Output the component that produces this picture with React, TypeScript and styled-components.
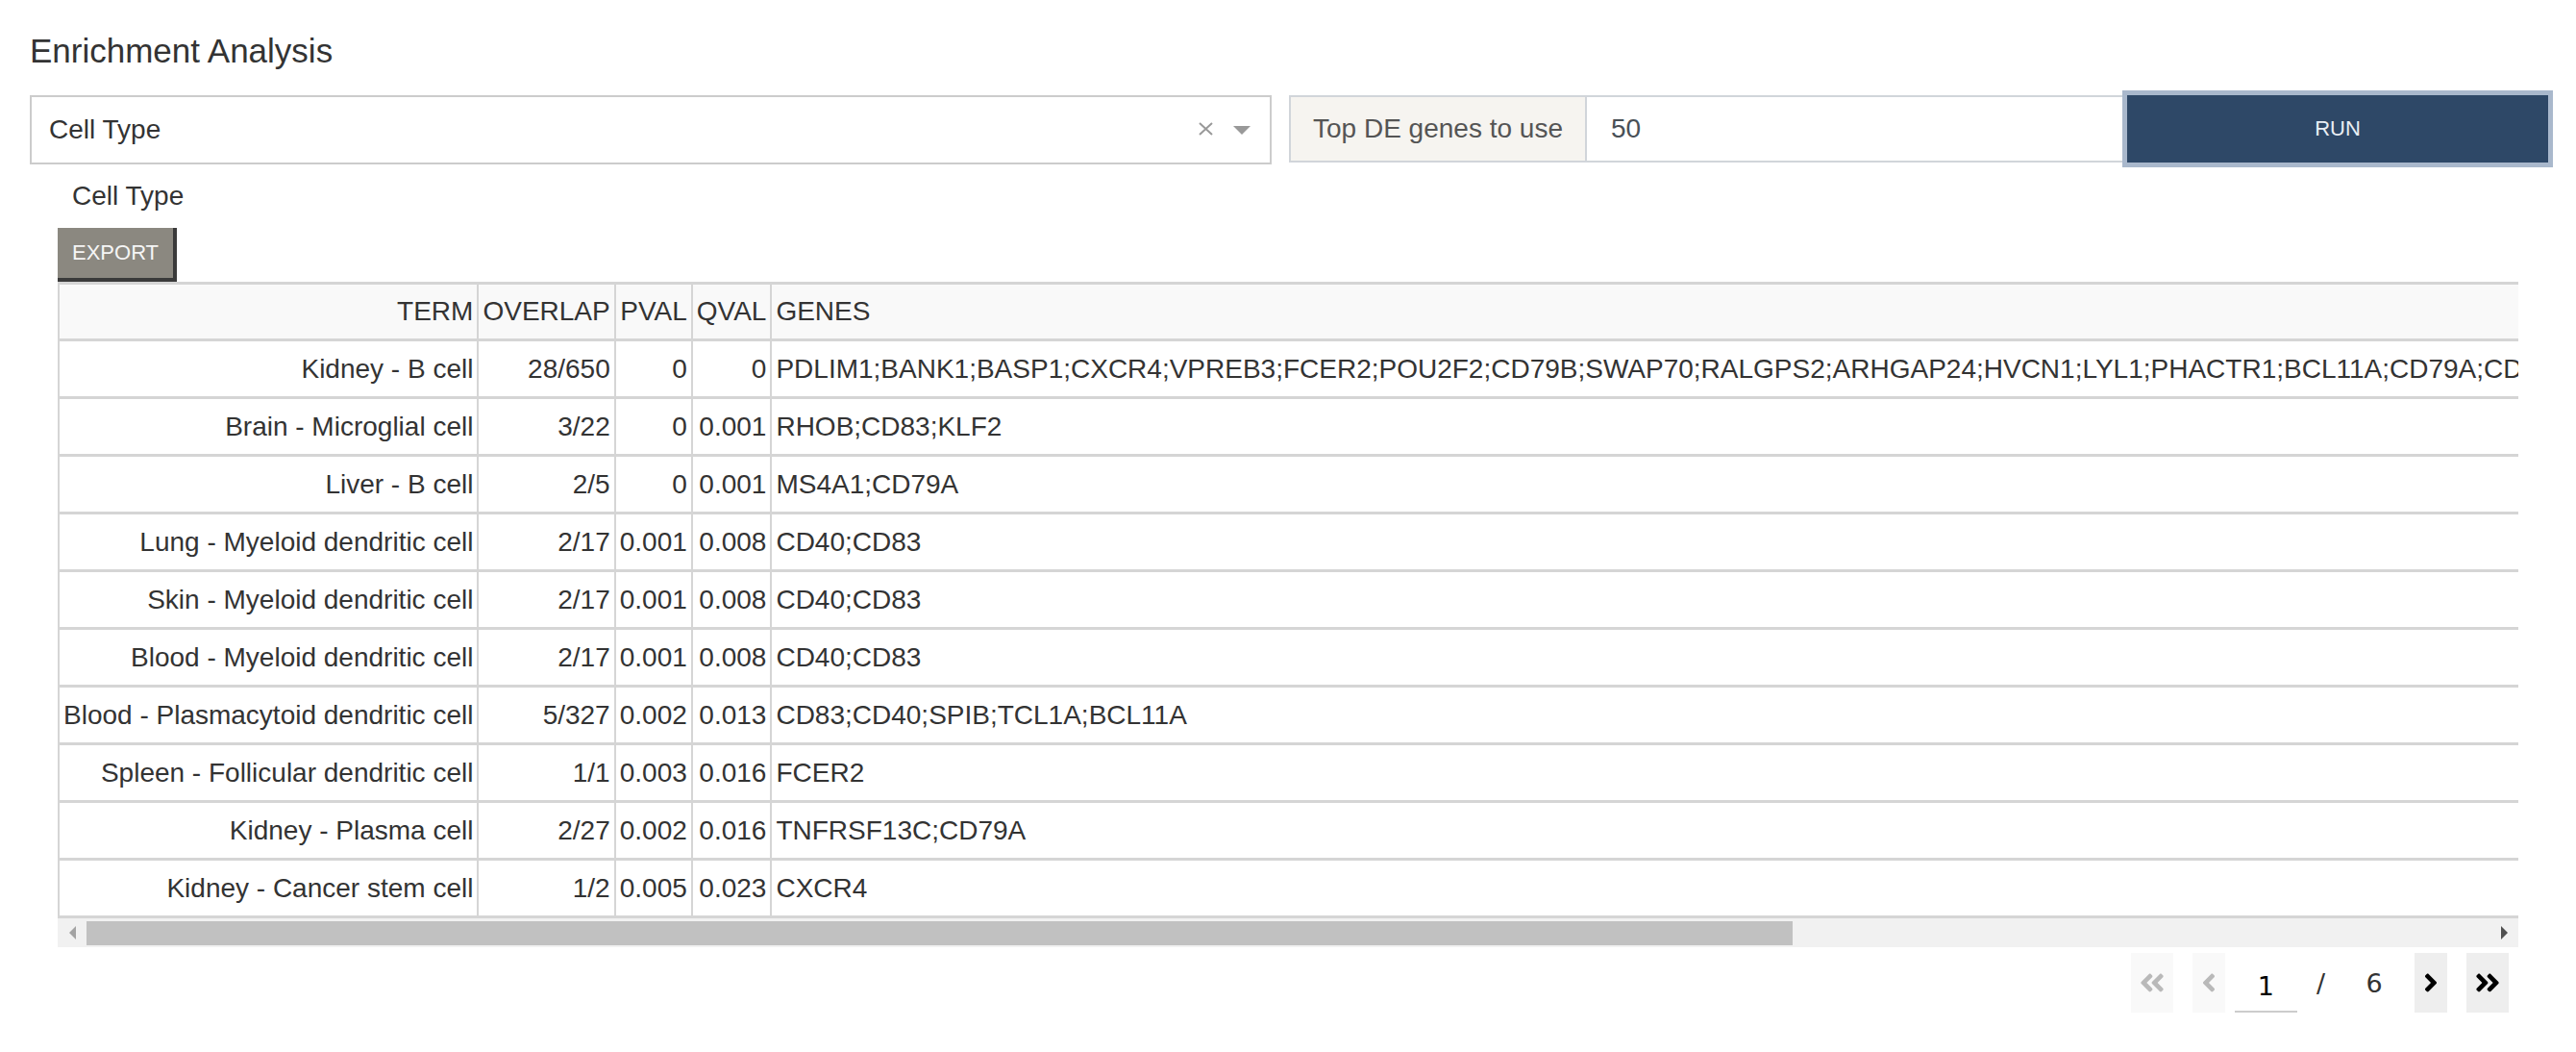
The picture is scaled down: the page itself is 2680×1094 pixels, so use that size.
import React from 'react';
import styled, { createGlobalStyle } from 'styled-components';
import { FaAngleDoubleLeft, FaAngleLeft, FaAngleRight, FaAngleDoubleRight } from 'react-icons/fa';

const GlobalStyle = createGlobalStyle`
  html, body { margin: 0; padding: 0; background: #fff; }
  body { font-family: "Liberation Sans", Arial, sans-serif; color: #333; }
  * { box-sizing: border-box; }
`;

const Page = styled.div`
  padding: 33px 29px 30px 31px;
`;

const Title = styled.h3`
  margin: 0;
  font-size: 35px;
  line-height: 40px;
  font-weight: 400;
  color: #333;
`;

const Controls = styled.div`
  display: grid;
  grid-template-columns: 1292fr 1310fr;
  column-gap: 18px;
  align-items: start;
  margin-top: 26px;
`;

const SelectBox = styled.div`
  display: flex;
  align-items: center;
  height: 72px;
  border: 2px solid #ccc;
  padding: 0 20px 0 18px;
  font-size: 28px;
  color: #333;
`;

const SelectValue = styled.span`
  flex: 1;
`;

const ClearIcon = styled.svg`
  width: 15px;
  height: 14px;
  margin-right: 21px;
  margin-top: -3px;
`;

const Caret = styled.span`
  width: 0;
  height: 0;
  border-style: solid;
  border-width: 9px 9px 0 9px;
  border-color: #999 transparent transparent transparent;
`;

const InputGroup = styled.div`
  display: flex;
  height: 70px;
`;

const Addon = styled.div`
  width: 310px;
  flex: none;
  display: flex;
  align-items: center;
  justify-content: center;
  background: #f6f4f0;
  border: 2px solid #d1d5da;
  font-size: 28px;
  color: #555;
  white-space: nowrap;
`;

const NumberInput = styled.input`
  width: 559px;
  flex: none;
  border: 2px solid #d1d5da;
  border-left: 0;
  padding: 0 0 0 25px;
  font-family: "Liberation Sans", Arial, sans-serif;
  font-size: 28px;
  color: #495057;
  outline: none;
  background: #fff;
`;

const RunButton = styled.button`
  flex: 1;
  margin-left: 3px;
  background: #2e4867;
  color: #e9eef4;
  border: 0;
  box-shadow: 0 0 0 5px #a9b8cc;
  font-family: "Liberation Sans", Arial, sans-serif;
  font-size: 22px;
  position: relative;
`;

const Results = styled.div`
  padding: 0 31px 0 29px;
  margin-top: 17px;
`;

const SectionLabel = styled.div`
  padding-left: 15px;
  font-size: 28px;
  line-height: 32px;
  color: #333;
`;

const ExportButton = styled.button`
  display: block;
  margin-top: 17px;
  height: 56px;
  padding: 0 15px;
  background: #8b8880;
  color: #f5f5f5;
  border: 0;
  border-right: 4px solid #3a3a3a;
  border-bottom: 4px solid #3a3a3a;
  font-family: "Liberation Sans", Arial, sans-serif;
  font-size: 22px;
`;

const TableScroll = styled.div`
  overflow: hidden;
`;

const Table = styled.table`
  border-collapse: separate;
  border-spacing: 0;
  border-top: 3px solid #d5d5d5;
  border-left: 2px solid #d5d5d5;
  font-size: 28px;
  white-space: nowrap;
  color: #333;
`;

const HeadCell = styled.th<{ $align?: string }>`
  box-sizing: border-box;
  height: 59px;
  padding: 0 4px;
  background: #f9f9f9;
  font-weight: 400;
  text-align: ${(p) => p.$align || 'right'};
  border-right: 2px solid #d5d5d5;
  border-bottom: 3px solid #d5d5d5;
`;

const Cell = styled.td<{ $align?: string }>`
  box-sizing: border-box;
  height: 60px;
  padding: 0 4px;
  text-align: ${(p) => p.$align || 'right'};
  border-right: 2px solid #d5d5d5;
  border-bottom: 3px solid #d5d5d5;
`;

const ScrollBar = styled.div`
  display: flex;
  height: 30px;
  background: #f1f1f1;
`;

const ScrollArrow = styled.div<{ $dir: 'left' | 'right' }>`
  width: 30px;
  flex: none;
  display: flex;
  align-items: center;
  justify-content: center;

  &::before {
    content: '';
    width: 0;
    height: 0;
    border-style: solid;
    border-width: ${(p) => (p.$dir === 'left' ? '7px 7px 7px 0' : '7px 0 7px 7px')};
    border-color: ${(p) =>
      p.$dir === 'left'
        ? 'transparent #a3a3a3 transparent transparent'
        : 'transparent transparent transparent #505050'};
  }
`;

const ScrollTrack = styled.div`
  flex: 1;
  padding: 3px 0 2px 0;
`;

const ScrollThumb = styled.div`
  height: 100%;
  background: #c1c1c1;
`;

const Pager = styled.div`
  display: flex;
  justify-content: flex-end;
  align-items: center;
  margin-top: 6px;
  padding-right: 10px;
  height: 62px;
  font-family: "DejaVu Sans", sans-serif;
  font-size: 27px;
`;

const PageBtn = styled.button<{ $w: number; $on?: boolean; $ml?: number }>`
  width: ${(p) => p.$w}px;
  height: 62px;
  margin-left: ${(p) => p.$ml || 0}px;
  display: flex;
  align-items: center;
  justify-content: center;
  padding: 0;
  border: 0;
  background: ${(p) => (p.$on ? '#eeeeee' : '#f9f9f9')};
  color: ${(p) => (p.$on ? '#000' : '#b9b9b9')};
`;

const PageInput = styled.input`
  width: 65px;
  height: 62px;
  margin-left: 10px;
  border: 0;
  border-bottom: 2px solid #cccccc;
  padding: 8px 0 0 0;
  text-align: center;
  font-family: "DejaVu Sans", sans-serif;
  font-size: 27px;
  color: #000;
  background: transparent;
  outline: none;
`;

const PagerText = styled.span<{ $w?: number; $ml: number }>`
  margin-left: ${(p) => p.$ml}px;
  width: ${(p) => (p.$w ? `${p.$w}px` : 'auto')};
  text-align: center;
  color: #333;
`;

type Row = [string, string, string, string, string];

const rows: Row[] = [
  [
    'Kidney - B cell',
    '28/650',
    '0',
    '0',
    'PDLIM1;BANK1;BASP1;CXCR4;VPREB3;FCER2;POU2F2;CD79B;SWAP70;RALGPS2;ARHGAP24;HVCN1;LYL1;PHACTR1;BCL11A;CD79A;CD37;CD22;CD40;CD83;SPIB;BLK;TCL1A;MS4A1;KLF2;IRF8;FCRLA;CD74',
  ],
  ['Brain - Microglial cell', '3/22', '0', '0.001', 'RHOB;CD83;KLF2'],
  ['Liver - B cell', '2/5', '0', '0.001', 'MS4A1;CD79A'],
  ['Lung - Myeloid dendritic cell', '2/17', '0.001', '0.008', 'CD40;CD83'],
  ['Skin - Myeloid dendritic cell', '2/17', '0.001', '0.008', 'CD40;CD83'],
  ['Blood - Myeloid dendritic cell', '2/17', '0.001', '0.008', 'CD40;CD83'],
  ['Blood - Plasmacytoid dendritic cell', '5/327', '0.002', '0.013', 'CD83;CD40;SPIB;TCL1A;BCL11A'],
  ['Spleen - Follicular dendritic cell', '1/1', '0.003', '0.016', 'FCER2'],
  ['Kidney - Plasma cell', '2/27', '0.002', '0.016', 'TNFRSF13C;CD79A'],
  ['Kidney - Cancer stem cell', '1/2', '0.005', '0.023', 'CXCR4'],
];

const visibleWidth = 2560;
const contentWidth = 3605;

export default function App() {
  return (
    <>
      <GlobalStyle />
      <Page>
        <Title>Enrichment Analysis</Title>
        <Controls>
          <SelectBox>
            <SelectValue>Cell Type</SelectValue>
            <ClearIcon viewBox="0 0 15 14">
              <path d="M1 1 L14 13 M14 1 L1 13" stroke="#999" strokeWidth="2" fill="none" />
            </ClearIcon>
            <Caret />
          </SelectBox>
          <InputGroup>
            <Addon>Top DE genes to use</Addon>
            <NumberInput type="text" defaultValue="50" />
            <RunButton>RUN</RunButton>
          </InputGroup>
        </Controls>
        <Results>
          <SectionLabel>Cell Type</SectionLabel>
          <ExportButton>EXPORT</ExportButton>
          <TableScroll>
            <Table>
              <thead>
                <tr>
                  <HeadCell>TERM</HeadCell>
                  <HeadCell>OVERLAP</HeadCell>
                  <HeadCell>PVAL</HeadCell>
                  <HeadCell>QVAL</HeadCell>
                  <HeadCell $align="left">GENES</HeadCell>
                </tr>
              </thead>
              <tbody>
                {rows.map((r, i) => (
                  <tr key={i}>
                    <Cell>{r[0]}</Cell>
                    <Cell>{r[1]}</Cell>
                    <Cell>{r[2]}</Cell>
                    <Cell>{r[3]}</Cell>
                    <Cell $align="left">{r[4]}</Cell>
                  </tr>
                ))}
              </tbody>
            </Table>
          </TableScroll>
          <ScrollBar>
            <ScrollArrow $dir="left" />
            <ScrollTrack>
              <ScrollThumb style={{ width: `${(visibleWidth / contentWidth) * 100}%` }} />
            </ScrollTrack>
            <ScrollArrow $dir="right" />
          </ScrollBar>
          <Pager>
            <PageBtn $w={44}>
              <FaAngleDoubleLeft size={30} />
            </PageBtn>
            <PageBtn $w={34} $ml={20}>
              <FaAngleLeft size={30} />
            </PageBtn>
            <PageInput type="text" defaultValue="1" />
            <PagerText $ml={20}>/</PagerText>
            <PagerText $ml={21} $w={60}>6</PagerText>
            <PageBtn $w={34} $ml={12} $on>
              <FaAngleRight size={30} />
            </PageBtn>
            <PageBtn $w={44} $ml={20} $on>
              <FaAngleDoubleRight size={30} />
            </PageBtn>
          </Pager>
        </Results>
      </Page>
    </>
  );
}
